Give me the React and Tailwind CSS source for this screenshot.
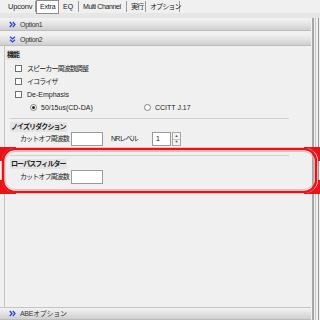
import React from "react";

const font = "font-['Liberation_Sans','Noto_Sans_CJK_JP',sans-serif]";
const jp = "text-[7px] tracking-[-0.9px]";

const Chevrons = ({ down }) => (
  <svg width="7" height="7" viewBox="0 0 7 7" className="shrink-0">
    {down ? (
      <g fill="none" stroke="#2845d6" strokeWidth="1.3">
        <path d="M1 0.8 L3.5 3 L6 0.8" />
        <path d="M1 3.8 L3.5 6 L6 3.8" />
      </g>
    ) : (
      <g fill="none" stroke="#2845d6" strokeWidth="1.3">
        <path d="M0.8 1 L3 3.5 L0.8 6" />
        <path d="M3.8 1 L6 3.5 L3.8 6" />
      </g>
    )}
  </svg>
);

const Bar = ({ label, down }) => (
  <div className="h-[12px] flex items-center gap-[4px] pl-[9px] bg-gradient-to-b from-[#f2f2f2] via-[#e2e2e2] to-[#cfcfcf] border-b border-[#bdbdbd]">
    <Chevrons down={down} />
    <span className="text-[7px] leading-none text-[#333] tracking-[-0.3px]">{label}</span>
  </div>
);

const Check = ({ label, latin }) => (
  <div className="h-[13px] flex items-center gap-[5px] pl-[10px]">
    <span className="w-[7px] h-[7px] border border-[#707070] bg-white" />
    <span className={`${latin ? "text-[7px]" : jp} leading-none text-[#222] whitespace-nowrap`}>{label}</span>
  </div>
);

const Radio = ({ label, on }) => (
  <div className="flex items-center gap-[4px]">
    <span className="w-[7px] h-[7px] rounded-full border border-[#808080] bg-white flex items-center justify-center">
      {on && <span className="w-[3px] h-[3px] rounded-full bg-[#222]" />}
    </span>
    <span className="text-[7px] leading-none text-[#222] whitespace-nowrap">{label}</span>
  </div>
);

const Label = ({ children }) => (
  <div className={`w-fit bg-[#e4e4e4] px-[1px] ${jp} leading-[10px] font-bold text-[#222] whitespace-nowrap`}>
    {children}
  </div>
);

const Group = ({ label }) => (
  <div className="pl-[5px]">
    <div className="h-px bg-[#d0d0d0] mr-[22px]" />
    <div className="mt-[3px]"><Label>{label}</Label></div>
  </div>
);

const Input = ({ w, value }) => (
  <div className={`h-[14px] ${w} bg-white border border-[#9a9a9a] text-[7px] leading-[12px] pl-[3px] text-[#111]`}>
    {value}
  </div>
);

const tabs = [
  { t: "Upconv", w: "w-[32px]", cls: "text-[7.5px] tracking-[-0.2px]" },
  { t: "Extra", w: "w-[23px]", cls: "text-[7px] tracking-[-0.2px]", on: true },
  { t: "EQ", w: "w-[20px]", cls: "text-[7px]" },
  { t: "Multi Channel", w: "w-[48px]", cls: "text-[7px] tracking-[-0.4px]" },
  { t: "実行", w: "w-[19px]", cls: jp },
  { t: "オプション", w: "w-[34px]", cls: jp },
];

export default function App() {
  return (
    <div className={`relative w-[320px] h-[320px] overflow-hidden bg-[#f0f0f0] ${font} flex flex-col`}>
      <div className="h-[18px] flex items-center pl-[4px] border-b-[5px] border-[#e6e6e6]">
        {tabs.map((x) =>
          x.on ? (
            <span key={x.t} className={`${x.w} ${x.cls} leading-[12px] pl-[3px] bg-white border border-[#8c8c8c] text-[#222] whitespace-nowrap`}>
              {x.t}
            </span>
          ) : (
            <span key={x.t} className={`${x.w} ${x.cls} leading-[11px] pl-[4px] border-r border-[#9a9a9a] text-[#222] whitespace-nowrap`}>
              {x.t}
            </span>
          )
        )}
      </div>
      <div className="flex-1 flex">
        <div className="w-[311px] flex flex-col">
          <div className="mt-[1px]"><Bar label="Option1" /></div>
          <div className="mt-[3px]"><Bar label="Option2" down /></div>
          <div className="flex-1 ml-[4px] border-l border-[#c4c4c4] flex flex-col">
            <div className="pt-[4px] pl-[1px] h-[14px]">
              <Label>機能</Label>
            </div>
            <div className="mt-[2px]">
              <Check label="スピーカー周波数調整" />
              <Check label="イコライザ" />
              <Check label="De-Emphasis" latin />
              <div className="h-[13px] flex items-center pl-[25px]">
                <div className="w-[114px]"><Radio label="50/15us(CD-DA)" on /></div>
                <Radio label="CCITT J.17" />
              </div>
            </div>
            <div className="mt-[4px]"><Group label="ノイズリダクション" /></div>
            <div className="flex items-center pl-[15px] h-[14px]">
              <span className={`w-[51px] ${jp} text-[#222] whitespace-nowrap`}>カットオフ周波数</span>
              <Input w="w-[32px]" />
              <span className={`ml-[8px] w-[41px] ${jp} text-[#222] whitespace-nowrap`}>NRレベル</span>
              <Input w="w-[19px]" value="1" />
              <div className="ml-[1px] w-[9px] h-[14px] flex flex-col border border-[#a8a8a8] bg-[#f4f4f4]">
                <span className="flex-1 flex items-center justify-center border-b border-[#c8c8c8] text-[4px] leading-none text-[#555]">▲</span>
                <span className="flex-1 flex items-center justify-center text-[4px] leading-none text-[#555]">▼</span>
              </div>
            </div>
            <div className="mt-[9px]"><Group label="ローパスフィルター" /></div>
            <div className="flex items-center pl-[15px] h-[14px] mt-[1px]">
              <span className={`w-[51px] ${jp} text-[#222] whitespace-nowrap`}>カットオフ周波数</span>
              <Input w="w-[32px]" />
            </div>
            <div className="flex-1" />
          </div>
          <div className="border-t border-[#c4c4c4]">
            <Bar label="ABEオプション" />
          </div>
        </div>
        <div className="w-[9px] flex">
          <div className="w-[2px] ml-[1px] bg-[#a6a6a6]" />
          <div className="w-[1px] ml-[1px] bg-[#c8c8c8]" />
          <div className="w-[1px] ml-[2px] bg-[#9a9a9a]" />
        </div>
      </div>
      <svg className="absolute left-0 top-[147px] pointer-events-none" width="320" height="47" viewBox="0 0 320 47">
        <rect x="3" y="2" width="313" height="43" rx="12" fill="none" stroke="#e8141a" strokeWidth="2.5" />
        <rect x="5" y="4.5" width="309" height="38" rx="10" fill="none" stroke="#f5a6a6" strokeWidth="0.8" />
        <path d="M0 0 H16 V1 A13 13 0 0 0 2 14 H0 Z" fill="#e8141a" />
        <path d="M320 0 H304 V1 A13 13 0 0 1 318 14 H320 Z" fill="#e8141a" />
        <path d="M0 47 H16 V46 A13 13 0 0 1 2 33 H0 Z" fill="#e8141a" />
        <path d="M320 47 H304 V46 A13 13 0 0 0 318 33 H320 Z" fill="#e8141a" />
      </svg>
    </div>
  );
}
